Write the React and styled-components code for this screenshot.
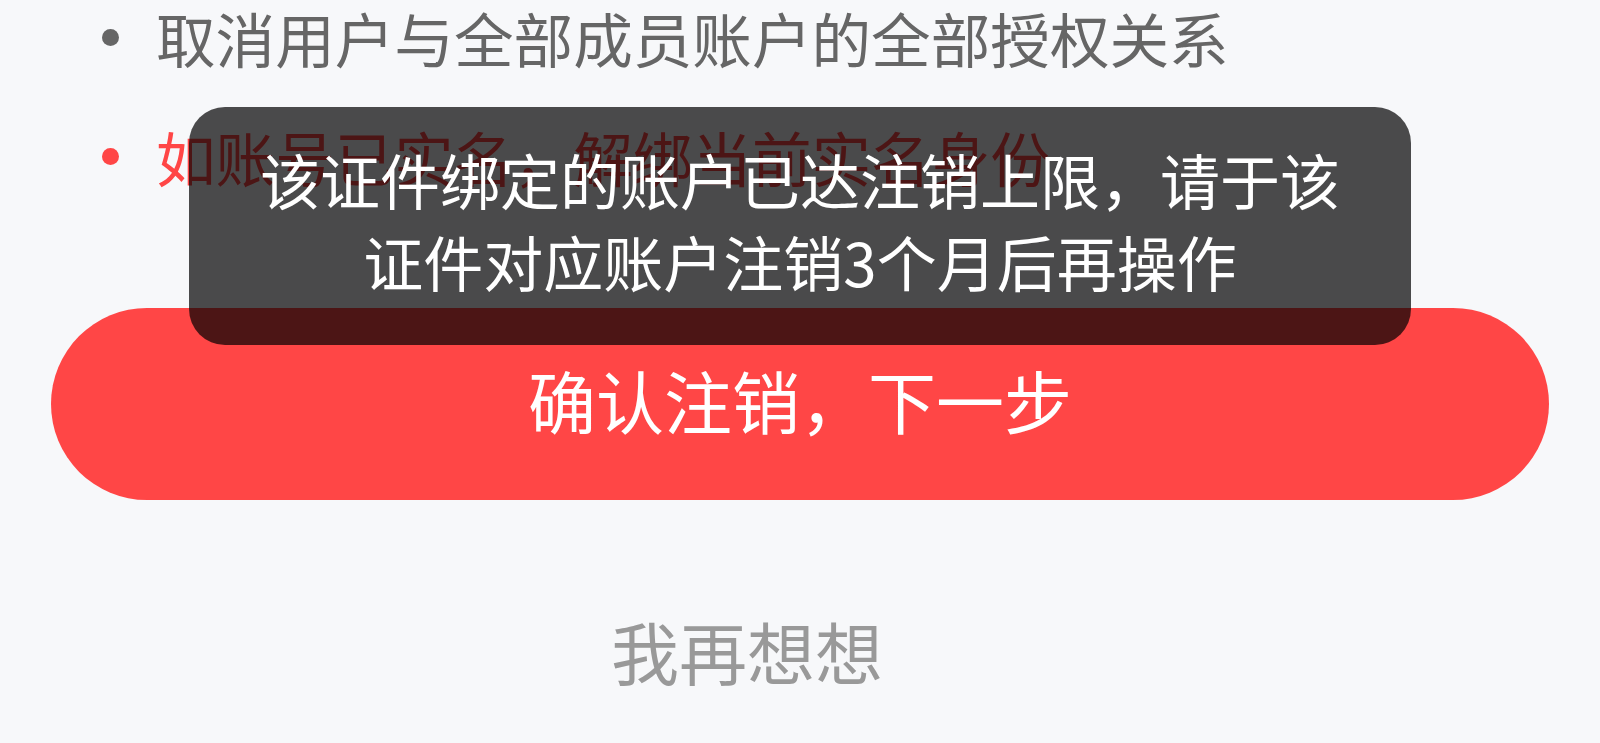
import React from "react";
import styled, { createGlobalStyle } from "styled-components";

const GlobalStyle = createGlobalStyle`
  html, body {
    margin: 0;
    padding: 0;
    background: #f7f8fa;
    overflow: hidden;
  }
  body {
    font-family: "Noto Sans CJK SC", "Noto Sans", sans-serif;
  }
`;

const Page = styled.div`
  position: relative;
  width: 1600px;
  height: 743px;
  background: #f7f8fa;
  padding: 0 51px;
  box-sizing: border-box;
`;

const NoticeList = styled.ul`
  list-style: none;
  margin: 0;
  padding: 0;
  display: flex;
  flex-direction: column;
  gap: 45px;
`;

const NoticeItem = styled.li`
  display: flex;
  align-items: center;
  padding-left: 51px;
  height: 74px;
  font-size: 59.6px;
  line-height: 74px;
  color: ${(p) => (p.$warn ? "#ff4646" : "#666666")};
  white-space: nowrap;
`;

const Dot = styled.span`
  width: 17px;
  height: 17px;
  border-radius: 50%;
  background: currentColor;
  margin-right: 37px;
  flex-shrink: 0;
`;

const ConfirmButton = styled.button`
  display: flex;
  align-items: center;
  justify-content: center;
  width: 100%;
  height: 192px;
  margin-top: 115px;
  border: none;
  border-radius: 96px;
  background: #ff4646;
  color: #ffffff;
  font-family: "Noto Sans CJK SC", sans-serif;
  font-size: 68px;
  padding: 0 0 10px;
  cursor: pointer;
`;

const CancelRow = styled.div`
  display: flex;
  justify-content: center;
  margin-top: 109px;
`;

const CancelText = styled.span`
  font-size: 68px;
  line-height: 84px;
  color: #999999;
  margin-right: 106px;
`;

const Toast = styled.div`
  position: absolute;
  top: 107px;
  left: 50%;
  transform: translateX(-50%);
  width: 1222px;
  box-sizing: border-box;
  padding: 31px 40px 43px;
  border-radius: 36px;
  background: rgba(0, 0, 0, 0.7);
  color: #ffffff;
  font-size: 60px;
  line-height: 82px;
  text-align: center;
`;

const ToastLine = styled.div`
  white-space: nowrap;
`;

export default function App() {
  return (
    <Page>
      <GlobalStyle />
      <NoticeList>
        <NoticeItem>
          <Dot />
          取消用户与全部成员账户的全部授权关系
        </NoticeItem>
        <NoticeItem $warn>
          <Dot />
          如账号已实名，解绑当前实名身份
        </NoticeItem>
      </NoticeList>
      <ConfirmButton>确认注销，下一步</ConfirmButton>
      <CancelRow>
        <CancelText>我再想想</CancelText>
      </CancelRow>
      <Toast>
        <ToastLine>该证件绑定的账户已达注销上限，请于该</ToastLine>
        <ToastLine>证件对应账户注销3个月后再操作</ToastLine>
      </Toast>
    </Page>
  );
}
